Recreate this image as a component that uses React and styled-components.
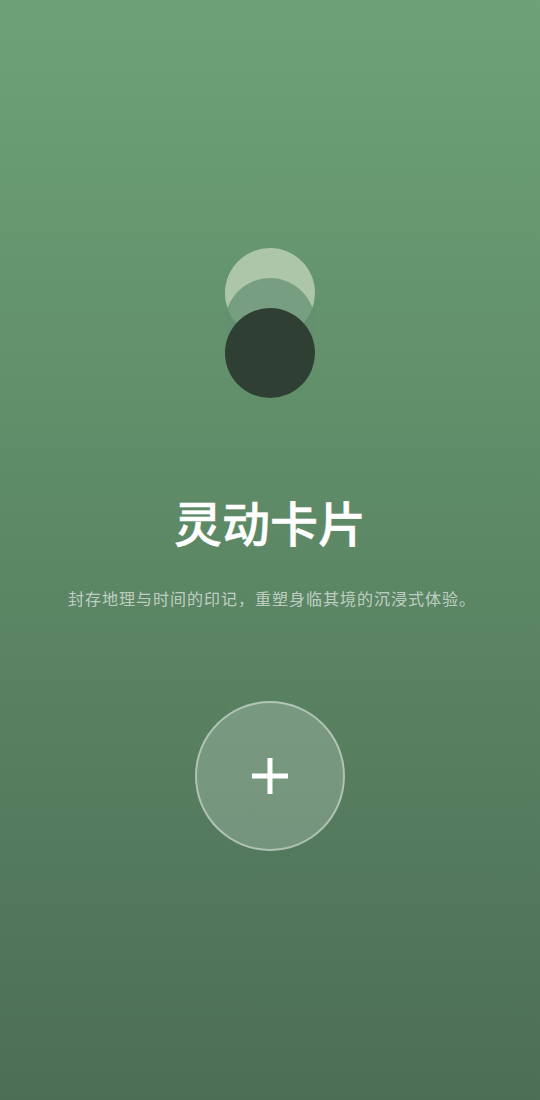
import styled, { createGlobalStyle } from "styled-components";

const GlobalStyle = createGlobalStyle`
  html, body {
    margin: 0;
    padding: 0;
  }
  body {
    font-family: "Noto Sans CJK SC", "Liberation Sans", sans-serif;
  }
`;

const Page = styled.div`
  width: 540px;
  height: 1100px;
  display: flex;
  flex-direction: column;
  align-items: center;
  padding-top: 248px;
  box-sizing: border-box;
  overflow: hidden;
  background: linear-gradient(180deg, #6da276 0%, #4c6e55 100%);
`;

const Stack = styled.div`
  display: flex;
  flex-direction: column;
  align-items: center;
`;

const Disc = styled.div`
  width: 90px;
  height: 90px;
  border-radius: 50%;
  background: ${(p) => p.$color};
  & + & {
    margin-top: -60px;
  }
`;

const Title = styled.h1`
  margin: 88px 0 0;
  font-size: 48px;
  line-height: 70px;
  font-weight: 500;
  -webkit-text-stroke: 0.5px #fff;
  color: #fff;
`;

const Subtitle = styled.p`
  margin: 30px 0 0;
  padding-left: 4px;
  font-size: 16px;
  line-height: 24px;
  letter-spacing: 1px;
  color: rgba(255, 255, 255, 0.62);
`;

const AddButton = styled.button`
  width: 150px;
  height: 150px;
  margin-top: 91px;
  padding: 0;
  display: flex;
  align-items: center;
  justify-content: center;
  box-sizing: border-box;
  border: 2px solid rgba(255, 255, 255, 0.42);
  border-radius: 50%;
  background: rgba(255, 255, 255, 0.2);
`;

const App = () => {
  return (
    <Page>
      <GlobalStyle />
      <Stack>
        <Disc $color="#adc6aa" />
        <Disc $color="rgba(100, 143, 113, 0.72)" />
        <Disc $color="#2f3f33" />
      </Stack>
      <Title>灵动卡片</Title>
      <Subtitle>封存地理与时间的印记，重塑身临其境的沉浸式体验。</Subtitle>
      <AddButton aria-label="add">
        <svg width="36" height="36" viewBox="0 0 36 36" fill="none">
          <path d="M18 0V36M0 18H36" stroke="#fff" strokeWidth="5" />
        </svg>
      </AddButton>
    </Page>
  );
};

export default App;
